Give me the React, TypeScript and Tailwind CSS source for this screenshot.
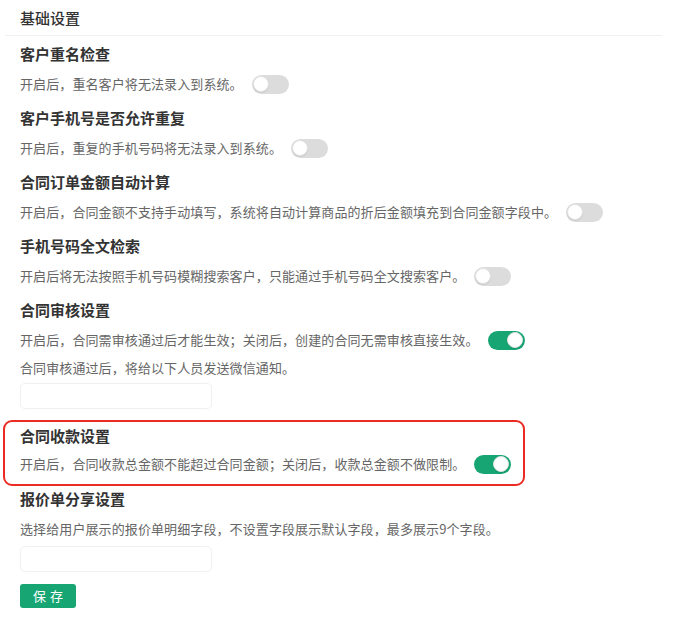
import * as React from "react";

type ToggleProps = {
    on: boolean;
};

function Toggle({ on }: ToggleProps) {
    return (
        <span
            className={
                on
                    ? "ml-[9px] inline-flex h-[19px] w-[37px] shrink-0 items-center justify-end rounded-full bg-[#17a673] px-[2px]"
                    : "ml-[9px] inline-flex h-[19px] w-[37px] shrink-0 items-center justify-start rounded-full bg-[#dcdcdc] px-[1px]"
            }
        >
            <span className="h-[16px] w-[16px] rounded-full border border-[#e2e2e2] bg-white shadow-[0_1px_1px_rgba(0,0,0,0.08)]" />
        </span>
    );
}

type SettingProps = {
    title: string;
    desc: string;
    on: boolean;
    className?: string;
};

function Setting({ title, desc, on, className }: SettingProps) {
    return (
        <div className={className}>
            <div className="h-6 text-[15px] leading-6 font-semibold text-[#333]">{title}</div>
            <div className="mt-[6px] flex h-6 items-center text-[13px] leading-6 tracking-[0.1px] text-[#666]">
                <span>{desc}</span>
                <Toggle on={on} />
            </div>
        </div>
    );
}

const settings = [
    { title: "客户重名检查", desc: "开启后，重名客户将无法录入到系统。", on: false },
    { title: "客户手机号是否允许重复", desc: "开启后，重复的手机号码将无法录入到系统。", on: false },
    {
        title: "合同订单金额自动计算",
        desc: "开启后，合同金额不支持手动填写，系统将自动计算商品的折后金额填充到合同金额字段中。",
        on: false
    },
    { title: "手机号码全文检索", desc: "开启后将无法按照手机号码模糊搜索客户，只能通过手机号码全文搜索客户。", on: false }
];

export default function App() {
    return (
        <div
            className="min-h-[632px] w-[675px] bg-white pl-[5px] pr-[13px]"
            style={{ fontFamily: '"Noto Sans CJK SC", "Noto Sans", sans-serif' }}
        >
            {/* Header */}
            <div className="border-b border-[#f0f0f0] pt-[6px] pb-[5px] pl-[15px]">
                <div className="h-6 text-[15px] leading-6 font-medium text-[#333]">基础设置</div>
            </div>

            <div className="pt-[6px] pl-[15px]">
                {settings.map((s, i) => (
                    <Setting key={s.title} {...s} className={i === 0 ? "" : "mt-[10px]"} />
                ))}

                <Setting
                    className="mt-[10px]"
                    title="合同审核设置"
                    desc="开启后，合同需审核通过后才能生效；关闭后，创建的合同无需审核直接生效。"
                    on
                />
                <div className="mt-[4px] h-6 text-[13px] leading-6 tracking-[0.1px] text-[#666]">合同审核通过后，将给以下人员发送微信通知。</div>
                <div className="mt-[3px] h-[26px] w-[192px] rounded-[5px] border border-[#f0f0f0]" />

                {/* Highlighted block */}
                <div className="mt-[11px] -ml-[17px] w-[522px] rounded-[9px] border-2 border-[#ec2b24] pt-[2px] pb-[8px] pl-[15px]">
                    <div className="h-6 text-[15px] leading-6 font-semibold text-[#333]">合同收款设置</div>
                    <div className="mt-[4px] flex h-6 items-center text-[13px] leading-6 tracking-[0.1px] text-[#666]">
                        <span>开启后，合同收款总金额不能超过合同金额；关闭后，收款总金额不做限制。</span>
                        <Toggle on />
                    </div>
                </div>

                <div className="mt-[1px] h-6 text-[15px] leading-6 font-semibold text-[#333]">报价单分享设置</div>
                <div className="mt-[6px] h-6 text-[13px] leading-6 tracking-[0.1px] text-[#666]">
                    选择给用户展示的报价单明细字段，不设置字段展示默认字段，最多展示9个字段。
                </div>
                <div className="mt-[5px] h-[26px] w-[192px] rounded-[5px] border border-[#f0f0f0]" />

                <button className="mt-[12px] flex h-[24px] w-[56px] items-center justify-center rounded-[3px] bg-[#17a673] text-[13px] tracking-[4px] text-white">
                    <span className="pl-[4px]">保存</span>
                </button>
            </div>
        </div>
    );
}
